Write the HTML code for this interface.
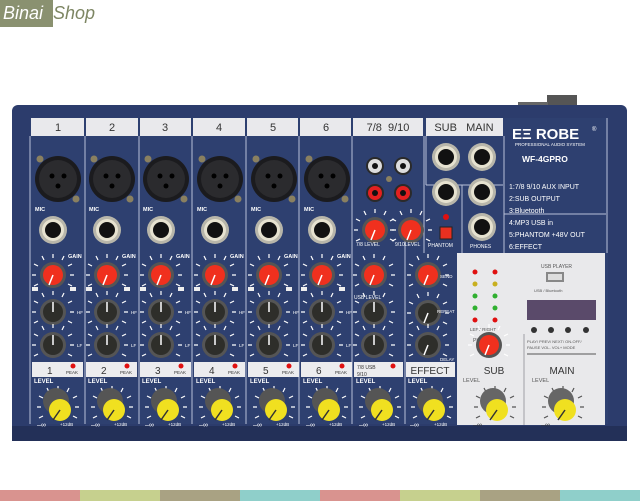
<!DOCTYPE html>
<html><head><meta charset="utf-8"><style>
html,body{margin:0;padding:0;background:#fff;}
svg{display:block}
text{font-family:"Liberation Sans",sans-serif}
</style></head><body>
<svg width="640" height="501" viewBox="0 0 640 501" xmlns="http://www.w3.org/2000/svg">
<defs>
<g id="xlr"><circle r="23" fill="#1b1b1e"/><circle r="19" fill="#2b2b2e"/><circle cx="-6" cy="-3" r="2.5" fill="#000"/><circle cx="6" cy="-3" r="2.5" fill="#000"/><circle cx="0" cy="7" r="2.5" fill="#000"/>
<circle cx="-18" cy="-20" r="3.5" fill="#8a8060"/><circle cx="18" cy="20" r="3.5" fill="#8a8060"/></g>
<g id="jack"><circle r="14" fill="#b8b6aa"/><circle r="11" fill="#e6e2d0"/><circle r="8" fill="#111"/></g>
<g id="rca"><circle r="9" fill="#2a2a2a"/><circle r="7" fill="#ddd"/><circle r="3" fill="#111"/></g>
<g id="rcar"><circle r="9" fill="#2a2a2a"/><circle r="7" fill="#e32020"/><circle r="3" fill="#111"/></g>
<g id="ticks" stroke="#fff" stroke-width="1.2"><path d="M-15,9 L-19,11 M-17,0 L-21,0 M-15,-9 L-19,-11 M-9,-15 L-11,-19 M0,-17 L0,-21 M9,-15 L11,-19 M15,-9 L19,-11 M17,0 L21,0 M15,9 L19,11"/></g>
<g id="red"><use href="#ticks"/><circle r="13" fill="#555"/><circle r="10" fill="#f0301e"/><path d="M0,0 L-4,10" stroke="#fff" stroke-width="1.5"/></g>
<g id="gray"><use href="#ticks"/><circle r="13" fill="#555"/><circle r="10" fill="#2e2e2a"/><path d="M0,0 L0,-10" stroke="#fff" stroke-width="1.5"/></g>
<g id="graybl"><use href="#ticks"/><circle r="13" fill="#555"/><circle r="10" fill="#2e2e2a"/><path d="M0,0 L-4,10" stroke="#fff" stroke-width="1.5"/></g>
<g id="yel"><use href="#ticks"/><circle cx="-2" cy="-6" r="13" fill="#555"/><circle cx="2" cy="3" r="11" fill="#f0e020"/><path d="M2,3 L-5,13" stroke="#333" stroke-width="1.5"/></g>
<g id="ticksd" stroke="#555" stroke-width="1.2"><path d="M-15,9 L-19,11 M-17,0 L-21,0 M-15,-9 L-19,-11 M-9,-15 L-11,-19 M0,-17 L0,-21 M9,-15 L11,-19 M15,-9 L19,-11 M17,0 L21,0 M15,9 L19,11"/></g>
<g id="yelw"><use href="#ticksd"/><circle cx="-2" cy="-6" r="13" fill="#666"/><circle cx="2" cy="3" r="11" fill="#f0e020"/><path d="M2,3 L-5,13" stroke="#333" stroke-width="1.5"/></g>
</defs>
<rect x="0" y="0" width="53" height="27" fill="#8a9170"/>
<text x="3" y="19" font-size="18" fill="#fff" font-style="italic" font-family="Liberation Serif,serif">Binai</text>
<text x="53" y="19" font-size="18" fill="#7d8663" font-style="italic" font-family="Liberation Serif,serif">Shop</text>
<rect x="547" y="95" width="30" height="12" fill="#555"/><rect x="518" y="102" width="30" height="5" fill="#666"/>
<rect x="12" y="105" width="615" height="336" rx="6" fill="#2c3c6c"/>
<rect x="12" y="426" width="615" height="15" fill="#233058"/>
<rect x="30" y="118" width="578" height="306" fill="#2e4070"/>
<g fill="#e9e9ec">
<rect x="31" y="118" width="53" height="18"/><rect x="86" y="118" width="52" height="18"/><rect x="140" y="118" width="51" height="18"/><rect x="193" y="118" width="52" height="18"/><rect x="247" y="118" width="51" height="18"/><rect x="300" y="118" width="51" height="18"/><rect x="353" y="118" width="70" height="18"/><rect x="426" y="118" width="77" height="18"/>
</g>
<g font-size="11" fill="#333" text-anchor="middle">
<text x="58" y="131">1</text><text x="112" y="131">2</text><text x="165" y="131">3</text><text x="219" y="131">4</text><text x="273" y="131">5</text><text x="326" y="131">6</text><text x="388" y="131">7/8&#160;&#160;9/10</text><text x="464" y="131">SUB&#160;&#160;&#160;MAIN</text>
</g>
<g stroke="#b8c0d8" stroke-width="1">
<path d="M30,136V424M85,136V424M139,136V424M192,136V424M246,136V424M299,136V424M352,136V424M405,240V424M424,136V253M504,136V253M504,214H606M607,118V253"/>
<path d="M426,136V185M426,185H503M462,185V253"/>
</g>
<text x="512" y="139" font-size="15" font-weight="bold" fill="#fff">EΞ ROBE</text><text x="592" y="131" font-size="6" fill="#fff">®</text>
<text x="515" y="146" font-size="4.5" fill="#fff">PROFESSIONAL AUDIO SYSTEM</text>
<text x="522" y="162" font-size="8.5" font-weight="bold" fill="#fff">WF-4GPRO</text>
<g font-size="7" fill="#fff">
<text x="509" y="189">1:7/8 9/10 AUX INPUT</text><text x="509" y="201">2:SUB OUTPUT</text><text x="509" y="213">3:Bluetooth</text><text x="509" y="225">4:MP3 USB in</text><text x="509" y="237">5:PHANTOM +48V OUT</text><text x="509" y="249">6:EFFECT</text>
</g>
<g id="ch">
<use href="#xlr" x="58" y="179"/><use href="#jack" x="53" y="230"/><use href="#red" x="53" y="275"/><use href="#gray" x="53" y="312"/><use href="#gray" x="53" y="345"/>
<text x="35" y="211" font-size="5.5" fill="#fff" font-weight="bold">MIC</text><text x="68" y="258" font-size="5.5" fill="#fff" font-weight="bold">GAIN</text>
<rect x="32" y="287" width="6" height="4" fill="#eee"/><rect x="70" y="287" width="6" height="4" fill="#eee"/>
<text x="77" y="314" font-size="4.5" fill="#fff">HF</text><text x="77" y="347" font-size="4.5" fill="#fff">LF</text>
<rect x="32" y="362" width="51" height="15" fill="#ececee"/>
<circle cx="73" cy="366" r="2.5" fill="#e01010"/><text x="66" y="374" font-size="4.5" fill="#333">PEAK</text>
<text x="34" y="383" font-size="6" fill="#fff" font-weight="bold">LEVEL</text>
<use href="#yel" x="58" y="407"/><text x="37" y="427" font-size="7" fill="#fff">–∞</text><text x="60" y="426" font-size="4.5" fill="#fff">+12dB</text>
</g>
<use href="#ch" x="54"/><use href="#ch" x="108"/><use href="#ch" x="162"/><use href="#ch" x="216"/><use href="#ch" x="269"/>
<g font-size="10" fill="#333"><text x="47" y="374">1</text><text x="101" y="374">2</text><text x="155" y="374">3</text><text x="209" y="374">4</text><text x="263" y="374">5</text><text x="316" y="374">6</text></g>
<use href="#rca" x="375" y="166"/><use href="#rca" x="403" y="166"/><use href="#rcar" x="375" y="193"/><use href="#rcar" x="403" y="193"/>
<circle cx="389" cy="179" r="3" fill="#8a8060"/>
<use href="#red" x="375" y="230"/><use href="#red" x="411" y="230"/>
<text x="356" y="246" font-size="5" fill="#fff">7/8 LEVEL</text><text x="395" y="246" font-size="5" fill="#fff">9/10LEVEL</text>
<circle cx="446" cy="217" r="3" fill="#e01010"/><rect x="440" y="227" width="12" height="12" fill="#e83020" stroke="#222"/><text x="428" y="247" font-size="5" fill="#fff">PHANTOM</text>
<use href="#jack" x="446" y="157"/><use href="#jack" x="482" y="157"/><use href="#jack" x="446" y="192"/><use href="#jack" x="482" y="192"/><use href="#jack" x="482" y="227"/>
<text x="470" y="248" font-size="5" fill="#fff">PHONES</text>
<use href="#red" x="374" y="275"/><use href="#gray" x="374" y="312"/><use href="#gray" x="374" y="345"/>
<text x="354" y="299" font-size="5" fill="#fff">USB LEVEL</text>
<rect x="354" y="362" width="49" height="15" fill="#ececee"/><text x="357" y="369" font-size="5" fill="#333">7/8 USB</text><text x="357" y="376" font-size="5" fill="#333">9/10</text><circle cx="393" cy="366" r="2.5" fill="#e01010"/>
<text x="356" y="383" font-size="6" fill="#fff" font-weight="bold">LEVEL</text><use href="#yel" x="380" y="407"/><text x="359" y="427" font-size="7" fill="#fff">–∞</text><text x="382" y="426" font-size="4.5" fill="#fff">+12dB</text>
<use href="#red" x="428" y="275"/><use href="#graybl" x="428" y="313"/><use href="#graybl" x="428" y="345"/>
<text x="440" y="278" font-size="4.5" fill="#fff">SEND</text><text x="437" y="313" font-size="4.5" fill="#fff">REPEAT</text><text x="440" y="361" font-size="4.5" fill="#fff">DELAY</text>
<rect x="406" y="362" width="49" height="15" fill="#ececee"/><text x="430" y="374" font-size="10" fill="#333" text-anchor="middle">EFFECT</text>
<text x="408" y="383" font-size="6" fill="#fff" font-weight="bold">LEVEL</text><use href="#yel" x="432" y="407"/><text x="410" y="427" font-size="7" fill="#fff">–∞</text><text x="434" y="426" font-size="4.5" fill="#fff">+12dB</text>
<rect x="457" y="253" width="148" height="172" fill="#e9e9eb"/>
<path d="M524,334V425" stroke="#c4c4c8" stroke-width="2"/>
<g>
<circle cx="475" cy="272" r="2.5" fill="#e01010"/><circle cx="495" cy="272" r="2.5" fill="#e01010"/>
<circle cx="475" cy="284" r="2.5" fill="#c8b020"/><circle cx="495" cy="284" r="2.5" fill="#c8b020"/>
<circle cx="475" cy="296" r="2.5" fill="#30b030"/><circle cx="495" cy="296" r="2.5" fill="#30b030"/>
<circle cx="475" cy="308" r="2.5" fill="#30b030"/><circle cx="495" cy="308" r="2.5" fill="#30b030"/>
<circle cx="475" cy="320" r="2.5" fill="#e01010"/><circle cx="495" cy="320" r="2.5" fill="#e01010"/>
<text x="470" y="331" font-size="4.5" fill="#555">LEFT RIGHT</text>
<text x="473" y="342" font-size="5" fill="#555">PHONES</text>
</g>
<use href="#red" x="489" y="345"/>
<text x="541" y="268" font-size="5" fill="#555">USB PLAYER</text>
<rect x="546" y="272" width="18" height="10" fill="#888"/><rect x="548" y="274" width="14" height="6" fill="#ddd"/>
<text x="534" y="292" font-size="4" fill="#555">USB / Bluetooth</text>
<rect x="527" y="300" width="69" height="20" fill="#5a4a6a"/>
<g fill="#333"><circle cx="534" cy="330" r="3"/><circle cx="551" cy="330" r="3"/><circle cx="568" cy="330" r="3"/><circle cx="586" cy="330" r="3"/></g>
<text x="527" y="343" font-size="4" fill="#555">PLAY/ PREV/ NEXT/ ON-OFF/</text><text x="527" y="349" font-size="4" fill="#555">PAUSE VOL- VOL+ MODE</text>
<path d="M527,354H596" stroke="#555"/>
<text x="494" y="374" font-size="10" fill="#333" text-anchor="middle">SUB</text><text x="562" y="374" font-size="10" fill="#333" text-anchor="middle">MAIN</text>
<text x="463" y="382" font-size="5.5" fill="#555">LEVEL</text><text x="532" y="382" font-size="5.5" fill="#555">LEVEL</text>
<use href="#yelw" x="495" y="407"/><use href="#yelw" x="563" y="407"/>
<text x="473" y="427" font-size="7" fill="#333">–∞</text><text x="541" y="427" font-size="7" fill="#333">–∞</text>
<g>
<rect x="0" y="490" width="80" height="11" fill="#d9938f"/><rect x="80" y="490" width="80" height="11" fill="#c6d08e"/><rect x="160" y="490" width="80" height="11" fill="#a9a283"/><rect x="240" y="490" width="80" height="11" fill="#8fcfca"/>
<rect x="320" y="490" width="80" height="11" fill="#d9938f"/><rect x="400" y="490" width="80" height="11" fill="#c6d08e"/><rect x="480" y="490" width="80" height="11" fill="#a9a283"/><rect x="560" y="490" width="80" height="11" fill="#8fcfca"/>
</g>
</svg>
</body></html>
